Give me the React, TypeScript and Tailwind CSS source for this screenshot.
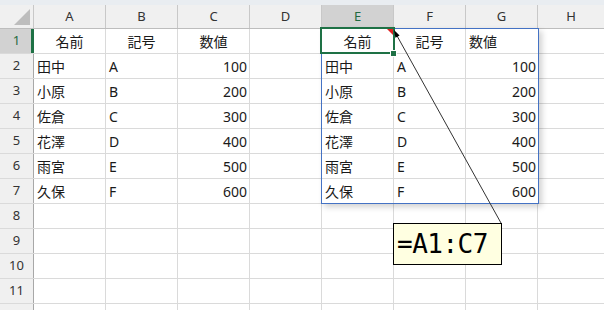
import React from "react";

const cols = ["A", "B", "C", "D", "E", "F", "G", "H"];
const data: [string, string, string][] = [
  ["田中", "A", "100"],
  ["小原", "B", "200"],
  ["佐倉", "C", "300"],
  ["花澤", "D", "400"],
  ["雨宮", "E", "500"],
  ["久保", "F", "600"],
];

function Cell({ children, align = "left", last = false, w = "w-[72px]" }: { children?: React.ReactNode; align?: "left" | "right" | "center"; last?: boolean; w?: string }) {
  const j = align === "right" ? "justify-end pr-[2px]" : align === "center" ? "justify-center" : "justify-start pl-[3px]";
  return (
    <div className={`${w} shrink-0 h-full flex items-center ${j} ${last ? "" : "border-r border-[#dadada]"} text-[14px] text-[#1a1a1a]`}>
      {children}
    </div>
  );
}

function rowContent(r: number): React.ReactNode[] {
  const cells: React.ReactNode[] = [];
  if (r === 1) {
    cells.push(<Cell key="a" align="center">名前</Cell>);
    cells.push(<Cell key="b" align="center">記号</Cell>);
    cells.push(<Cell key="c" align="center">数値</Cell>);
  } else if (r >= 2 && r <= 7) {
    const d = data[r - 2];
    cells.push(<Cell key="a">{d[0]}</Cell>);
    cells.push(<Cell key="b">{d[1]}</Cell>);
    cells.push(<Cell key="c" align="right">{d[2]}</Cell>);
  } else {
    cells.push(<Cell key="a" />);
    cells.push(<Cell key="b" />);
    cells.push(<Cell key="c" />);
  }
  for (let i = 0; i < 4; i++) cells.push(<Cell key={"e" + i} />);
  cells.push(<Cell key="h" w="w-[66px]" last />);
  return cells;
}

export default function App() {
  const rows = Array.from({ length: 12 }, (_, i) => i + 1);
  return (
    <div className="relative w-[604px] h-[310px] overflow-hidden bg-white font-['Noto_Sans','Noto_Sans_CJK_JP',sans-serif]">
      <div className="h-[5px] bg-[#e9edf1]" />
      {/* column header */}
      <div className="flex h-[24px] bg-[#f0f0f0] border-b border-[#bdbdbd]">
        <div className="relative w-[34px] shrink-0 h-full border-r border-[#c8c8c8]">
          <svg className="absolute left-0 top-0" width="33" height="23">
            <polygon points="30,4 30,20 14,20" fill="#bdbdbd" />
          </svg>
        </div>
        {cols.map((c, i) => (
          <div
            key={c}
            className={`${i === 7 ? "w-[66px]" : "w-[72px] border-r border-[#c8c8c8]"} shrink-0 h-full flex items-center justify-center text-[13px] ${c === "E" ? "bg-[#d2d2d2] text-[#1f6b41]" : "text-[#333333]"}`}
          >
            {c}
          </div>
        ))}
      </div>
      {rows.map((r) => (
        <div key={r} className="flex h-[25px] border-b border-[#dadada]">
          <div
            className={`w-[34px] shrink-0 h-full flex items-center justify-center text-[13px] ${
              r === 1 ? "bg-[#d2d2d2] text-[#1f6b41] border-r-[3px] border-[#1e7145] pl-[2px]" : "bg-[#f0f0f0] text-[#333333] border-r border-[#a8a8a8]"
            }`}
          >
            {r <= 11 ? r : ""}
          </div>
          {rowContent(r)}
        </div>
      ))}

      {/* linked picture */}
      <div className="absolute left-[321px] top-[28px] w-[218px] h-[176px] border border-[#4472c4] bg-white shadow-[3px_3px_6px_rgba(0,0,0,0.18)] flex flex-col">
        {[1, 2, 3, 4, 5, 6, 7].map((r) => (
          <div key={r} className={`flex ${r === 7 ? "h-[24px]" : "h-[25px] border-b border-[#dadada]"}`}>
            {r === 1 ? (
              <>
                <Cell align="center">名前</Cell>
                <Cell align="center">記号</Cell>
                <Cell last>数値</Cell>
              </>
            ) : (
              <>
                <Cell>{data[r - 2][0]}</Cell>
                <Cell>{data[r - 2][1]}</Cell>
                <Cell align="right" last>{data[r - 2][2]}</Cell>
              </>
            )}
          </div>
        ))}
      </div>

      {/* selected cell E1 */}
      <div className="absolute left-[320px] top-[27px] w-[75px] h-[27px] border-2 border-[#1e7145]" />
      <div className="absolute left-[390px] top-[50px] w-[7px] h-[7px] bg-[#1e7145] border border-white" />
      <svg className="absolute left-[387px] top-[29px]" width="6" height="6">
        <polygon points="0,0 6,0 6,6" fill="#e02020" />
      </svg>

      {/* comment arrow */}
      <svg className="absolute left-0 top-0 pointer-events-none" width="604" height="310">
        <line x1="501" y1="223" x2="396" y2="34" stroke="#333333" strokeWidth="1" />
        <polygon points="394,30 399.6,35.6 395.4,37.8" fill="#000000" />
      </svg>

      {/* comment box */}
      <div className="absolute left-[393px] top-[223px] w-[109px] h-[42px] border border-black bg-[#ffffe1] flex items-center pl-[3px] font-['DejaVu_Sans_Mono',monospace] text-[26px] leading-none text-black tracking-[-0.5px]">
        =A1:C7
      </div>
    </div>
  );
}
